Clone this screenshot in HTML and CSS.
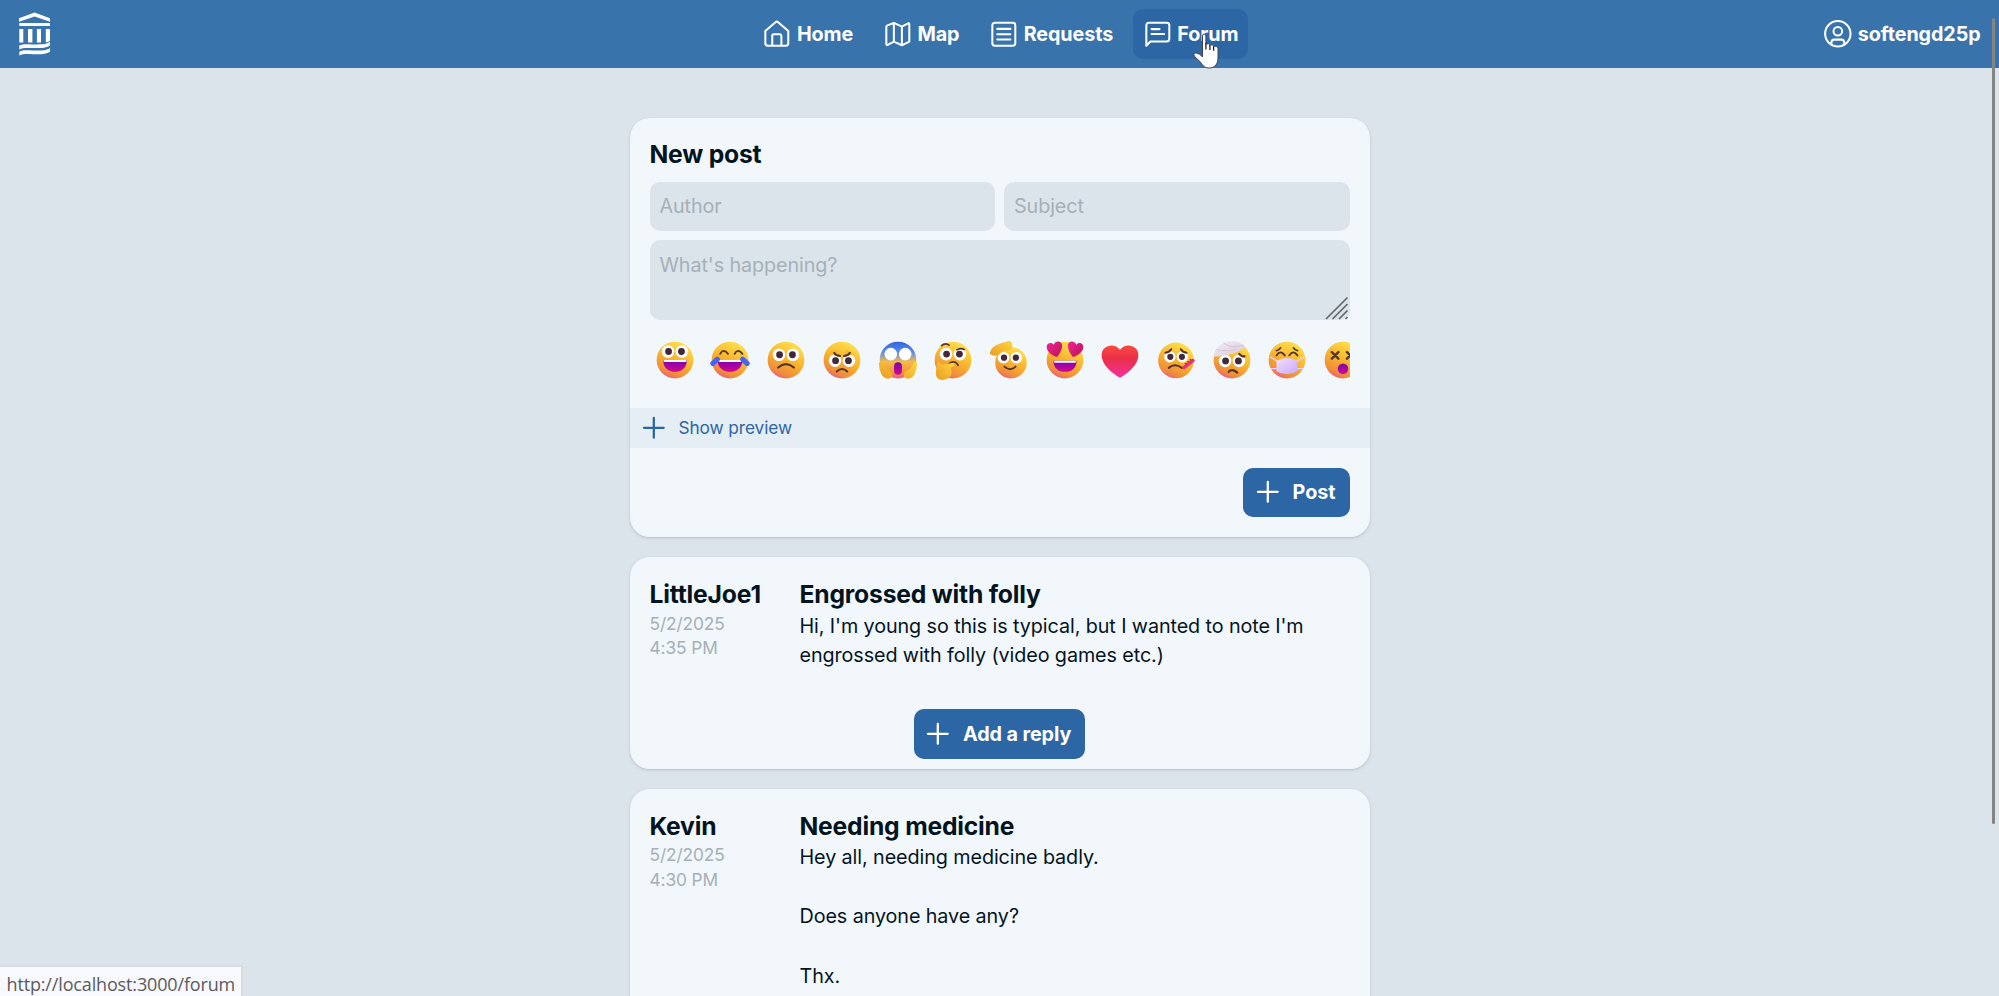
FILE: index.html
```html
<!DOCTYPE html>
<html lang="en">
<head>
<meta charset="utf-8">
<title>Forum</title>
<link rel="stylesheet" href="styles.css">
</head>
<body>
<svg class="defs" aria-hidden="true">
  <defs>
    <linearGradient id="shade" x1="0.75" y1="0.05" x2="0.3" y2="1"><stop offset="0" stop-color="#ffe04a"/><stop offset=".5" stop-color="#f8b22d"/><stop offset=".85" stop-color="#f08a3c"/><stop offset="1" stop-color="#e7588f"/></linearGradient>
    <linearGradient id="mouth" x1="0" y1="0" x2="0" y2="1"><stop offset="0" stop-color="#7c02b0"/><stop offset="1" stop-color="#d3068f"/></linearGradient>
    <linearGradient id="heart" x1=".5" y1="0" x2=".5" y2="1"><stop offset="0" stop-color="#fb4a3e"/><stop offset=".4" stop-color="#ea2f49"/><stop offset="1" stop-color="#f52f9d"/></linearGradient>
    <linearGradient id="pink" x1="0" y1="0" x2="1" y2="1"><stop offset="0" stop-color="#f0259b"/><stop offset="1" stop-color="#ba1250"/></linearGradient>
    <linearGradient id="fear" x1="0" y1="0" x2="0" y2="1"><stop offset="0" stop-color="#3263d8"/><stop offset=".28" stop-color="#588df0"/><stop offset=".55" stop-color="#f6bd45"/><stop offset=".85" stop-color="#f2913f"/><stop offset="1" stop-color="#e7588f"/></linearGradient>
    <linearGradient id="hand" x1="1" y1="0" x2="0" y2="1"><stop offset="0" stop-color="#ffd83e"/><stop offset="1" stop-color="#e99a25"/></linearGradient>
    <linearGradient id="mask" x1="0" y1="0" x2="1" y2="1"><stop offset="0" stop-color="#efe0ff"/><stop offset="1" stop-color="#cba8f5"/></linearGradient>
    <linearGradient id="wrap" x1="0" y1="0" x2="1" y2="1"><stop offset="0" stop-color="#f4edf4"/><stop offset="1" stop-color="#dac9dc"/></linearGradient>
    <symbol id="face" viewBox="0 0 32 32"><circle cx="16" cy="16" r="14" fill="url(#shade)"/></symbol>
    <symbol id="eyes" viewBox="0 0 32 32"><g fill="#fff"><circle cx="10.700" cy="12" r="4.800"/><circle cx="21.300" cy="12" r="4.800"/></g><g fill="#43273a"><circle cx="11.100" cy="12" r="2.600"/><circle cx="20.900" cy="12" r="2.600"/></g></symbol>
    <symbol id="plus" viewBox="0 0 24 24"><path d="M12 4v16M4 12h16" fill="none" stroke="currentColor" stroke-width="1.850" stroke-linecap="round"/></symbol>
  </defs>
</svg>

<header class="topbar">
  <a class="brand">
    <svg viewBox="0 0 32 44" fill="#fff">
      <path d="M0 6.300 15.600.5 31 6.300v3.400L15.600 4.500 0 9.700zM.3 10.900H31v3H.3zM.3 17h4v13.500h-4zM9 17h4.400v13.500H9zM17.900 17h4.100v13.500h-4.100zM26.800 17H31v11.500q-1.500 2-4.200 2z"/>
      <path d="M.3 33.500C5 31.300 9 32.600 16 32.400 23 32.400 27 32.600 31 29.800v3.700C27 36.500 22 36 16 36 9 36.200 4.500 35 .3 37.500zM.3 39.700C5 37.500 9 38.700 16 38.600 23 38.500 27 38.700 31 36v3.700C27 42.500 22 42.200 16 42.200 9 42.400 4.500 41.300.3 43.600z"/>
    </svg>
  </a>
  <nav class="nav">
    <a class="nav-item"><svg class="icon" viewBox="0 0 24 24"><path d="M2.700 9.700 10.900 2.600a1.600 1.600 0 0 1 2.200 0l8.200 7.100V19.700a2 2 0 0 1-2 2H4.700a2 2 0 0 1-2-2zM8.300 21.600v-8a1.200 1.200 0 0 1 1.200-1.200h5a1.200 1.200 0 0 1 1.200 1.200v8"/></svg><span>Home</span></a>
    <a class="nav-item"><svg class="icon" viewBox="0 0 24 24"><path d="M3.600 5.200 8.800 3.200 15.300 6.200 20.300 3.500Q21.300 3.200 21.300 4.300V18.300L15.300 21.300 8.800 18.300 3.800 21Q2.700 21.400 2.700 20.300V6.300Q2.700 5.600 3.600 5.200zM8.800 3.200v15.100M15.300 6.200v15.100"/></svg><span>Map</span></a>
    <a class="nav-item"><svg class="icon" viewBox="0 0 24 24"><rect x="2.700" y="3" width="18.600" height="18.600" rx="2"/><path d="M6.700 8h10.600M6.700 12.300h10.600M6.700 16.600h10.600"/></svg><span>Requests</span></a>
    <a class="nav-item active"><svg class="icon" viewBox="0 0 24 24"><path d="M2.700 21.600V5a2 2 0 0 1 2-2h14.600a2 2 0 0 1 2 2v11.300a2 2 0 0 1-2 2H6zM6.900 8.200h6.500M6.900 12.200h10.200"/></svg><span>Forum</span></a>
  </nav>
  <a class="nav-item user"><svg class="icon" viewBox="0 0 24 24"><circle cx="12" cy="12" r="10.300"/><circle cx="12" cy="9.900" r="3.500"/><path d="M6.800 20.700v-1.600a2.400 2.400 0 0 1 2.400-2.400h5.600a2.400 2.400 0 0 1 2.400 2.400v1.600"/></svg><span>softengd25p</span></a>
</header>

<main class="feed">
  <section class="card composer">
    <div class="composer-form">
      <h2 class="title">New post</h2>
      <div class="row">
        <input class="field" placeholder="Author">
        <input class="field" placeholder="Subject">
      </div>
      <div class="area">
        <span>What's happening?</span>
        <svg class="grip" viewBox="0 0 24 24"><path d="M1 23 22.500 1.500M7.500 23 22.500 8M14 23l8.500-8.500M20.500 23l2-2"/></svg>
      </div>
      <div class="emojis">
        <svg viewBox="0 0 32 32"><use href="#face"/><use href="#eyes" y="-2.500"/><path d="M7 16h18c0 6-4 9-9 9s-9-3-9-9z" fill="url(#mouth)"/><path d="M7.200 16h17.600l-.3 1.500h-17z" fill="#fff"/></svg>
        <svg viewBox="0 0 32 32"><use href="#face"/><path d="M8.500 11.300q2.500-4.500 6 0M19.500 11.300q2.500-4.500 6 0" fill="none" stroke="#55352f" stroke-width="1.400" stroke-linecap="round"/><path d="M6.500 16h19c0 6-4.500 9-9.500 9s-9.500-3-9.500-9z" fill="url(#mouth)"/><path d="M7 16h18l-.5 1.500h-17z" fill="#fff"/><path d="M6.300 15.500 3 18.600M25.700 15.500l3.300 3.100" stroke="#4664f2" stroke-width="4" stroke-linecap="round"/></svg>
        <svg viewBox="0 0 32 32"><use href="#face"/><use href="#eyes"/><path d="M10 21.700q6-5.200 12 0" fill="none" stroke="#55352f" stroke-width="1.700" stroke-linecap="round"/></svg>
        <svg viewBox="0 0 32 32"><use href="#face"/><use href="#eyes" y="4.500"/><path d="M6.500 12 13 8l2.500 5.500-5-1zM25.500 12 19 8l-2.500 5.500 5-1z" fill="#f6bb35"/><path d="M10 10.500q1.500 2.500 4.500 2.500M22 10.500q-1.500 2.500-4.500 2.500M12 24.700q4-3.700 8 0" fill="none" stroke="#55352f" stroke-width="1.600" stroke-linecap="round"/></svg>
        <svg viewBox="0 0 32 32"><circle cx="16" cy="16" r="14" fill="url(#fear)"/><circle cx="10.500" cy="11.500" r="4.800" fill="#fff"/><circle cx="21.500" cy="11.500" r="4.800" fill="#fff"/><rect x="13" y="17.700" width="6" height="9.500" rx="3" fill="url(#mouth)"/><path d="M1.500 18q2-1.500 3 1.500l2.500 3.500q5 1 4.500 5.500-2.500 3.500-7 0-3-4-3-10.500zM30.500 18q-2-1.500-3 1.500L25 23q-5 1-4.500 5.500 2.500 3.500 7 0 3-4 3-10.500z" fill="url(#hand)"/></svg>
        <svg viewBox="0 0 32 32"><use href="#face"/><use href="#eyes" y="-.5"/><path d="M7.200 5q3-2.500 5.800-.3M19 8.200q3-1.500 5.500-.2M12.700 19q4.500-3.500 7.200 1" fill="none" stroke="#55352f" stroke-width="1.300" stroke-linecap="round"/><path d="M4 17.500q2-1.300 3 2l9-1.200q2 .7.500 2.500l-2.500 1.300q2.300 3.500-.5 7-4 3.500-9 1.200-2-1.500-1.500-6z" fill="url(#hand)"/></svg>
        <svg viewBox="0 0 32 32"><circle cx="17.500" cy="18" r="12" fill="url(#shade)"/><g transform="translate(2 3.200) scale(.92)"><use href="#eyes"/></g><path d="M12.500 21q4.500 4 8.500 0" fill="none" stroke="#55352f" stroke-width="1.400" stroke-linecap="round"/><path d="M1.200 11q1-5 8-7.500l7-2.200q3 .8 2.200 5.700-1.500 2.500-5 1.300-3.400.3-5 3.700-4 2-7.200-1z" fill="url(#hand)"/></svg>
        <svg viewBox="0 0 32 32"><use href="#face"/><path d="M7.200 16.500h17.600c0 6-4 8.500-8.800 8.500s-8.800-2.500-8.800-8.500z" fill="url(#mouth)"/><path d="M7.500 16.500h17l-.4 1.500H7.900z" fill="#fff"/><path d="M10 13.800C6 12.500 2.200 9.500 2 6.200 1.900 3 5.600 1.900 7.500 4.300c.8-3.400 6-3.300 6.300.2.300 3-1.800 6.500-3.800 9.300z" fill="url(#pink)"/><path d="M22 13.800c4-1.300 7.800-4.300 8-7.600.1-3.200-3.600-4.300-5.500-1.900-.8-3.400-6-3.300-6.300.2-.3 3 1.800 6.500 3.800 9.300z" fill="url(#pink)"/></svg>
        <svg viewBox="0 0 32 32"><path d="M16 29.500C9 25.500 2 19 2 12.300 2 4.500 12 2.500 16 8.200 20 2.500 30 4.500 30 12.300 30 19 23 25.500 16 29.500z" fill="url(#heart)"/></svg>
        <svg viewBox="0 0 32 32"><circle cx="16" cy="16.300" r="13.600" fill="url(#shade)"/><g transform="translate(1.700 2.800) scale(.9)"><use href="#eyes"/></g><path d="M8 10.500q3-.5 4.300-2.700M24 10.500q-3-.5-4.300-2.700M10.500 22q4.500-4 10 0" fill="none" stroke="#55352f" stroke-width="1.600" stroke-linecap="round"/><path d="M22 21.800l7-5.500" stroke="#ef2a86" stroke-width="2.500" stroke-linecap="round"/><path d="M23 19l5-4" stroke="#55352f" stroke-width="1" stroke-dasharray="1 1.300"/></svg>
        <svg viewBox="0 0 32 32"><use href="#face"/><use href="#eyes" y="4.700"/><path d="M13.500 25q2.500-3 6.500.6M21.500 11.300q1.500 2 4 2" fill="none" stroke="#55352f" stroke-width="1.700" stroke-linecap="round"/><path d="M2 13.500Q3 4 12 2q8-2 14 3.800-6 6.700-24 7.700z" fill="url(#wrap)"/><path d="M9.500 3Q16 8 25 4.500M4 8q9 2 16-.5" stroke="#cfbfd3" stroke-width=".6" fill="none"/></svg>
        <svg viewBox="0 0 32 32"><use href="#face"/><path d="M8 12.500q3-4.500 6.300 0M17.700 12.500q3-4.500 6.300 0M8 8.800q2-.2 3-2M24 8.800q-2-.2-3-2" fill="none" stroke="#55352f" stroke-width="1.400" stroke-linecap="round"/><path d="M2.800 13.500 9 17M29.200 13.500 23 17M3.500 22.500H9M28.500 22.500H23" stroke="#e4d0fb" stroke-width="1"/><path d="M8 16.500q8-4 16 0v8q-8 4.500-16 0z" fill="url(#mask)"/></svg>
        <svg viewBox="0 0 32 32"><use href="#face"/><path d="m7.500 10 5 5m0-5-5 5M19 10l5 5m0-5-5 5" stroke="#55352f" stroke-width="1.800" stroke-linecap="round"/><circle cx="16" cy="22.700" r="4" fill="url(#mouth)"/></svg>
      </div>
    </div>
    <div class="preview"><svg class="icon"><use href="#plus"/></svg><span>Show preview</span></div>
    <div class="actions"><button class="btn"><svg class="icon"><use href="#plus"/></svg><span>Post</span></button></div>
  </section>

  <article class="card post">
    <div class="post-main">
      <div class="meta"><h2 class="title">LittleJoe1</h2><p class="date">5/2/2025<br>4:35 PM</p></div>
      <div class="content"><h2 class="title">Engrossed with folly</h2><p class="text">Hi, I'm young so this is typical, but I wanted to note I'm<br>engrossed with folly (video games etc.)</p></div>
    </div>
    <button class="btn reply"><svg class="icon"><use href="#plus"/></svg><span>Add a reply</span></button>
  </article>

  <article class="card post open">
    <div class="post-main">
      <div class="meta"><h2 class="title">Kevin</h2><p class="date">5/2/2025<br>4:30 PM</p></div>
      <div class="content"><h2 class="title">Needing medicine</h2><p class="text">Hey all, needing medicine badly.<br><br>Does anyone have any?<br><br>Thx.</p></div>
    </div>
  </article>
</main>

<div class="scroll-thumb"></div>
<div class="status">http://localhost:3000/forum</div>
<svg class="pointer" viewBox="0 0 26 37"><path d="M9.500 3q0-2 1.700-2t1.700 2v8q3.300-1 4 1 3-.7 3.700 1.200 3.900-.8 4.400 2.300v9.500c0 5.500-3 10-8.300 10-4.500 0-6.700-1.600-8.800-5.500L1.200 23c-.8-2 .2-3.500 2-3 2.500.5 4.500 1.800 6.300 4z" fill="#fff" stroke="#3c4352" stroke-width="1"/><path d="M12.900 10v6.500M16.900 12v5M20.600 13.200v4.500" stroke="#222" stroke-width="1.300"/></svg>
</body>
</html>
```
FILE: styles.css
```css
:root {
  font-size: 19.75px;
  --bg: #dce4eb;
  --card: #f2f7fb;
  --primary: #2d66a4;
  --text: #04141f;
  --muted: #a5b0b8;
}

* { box-sizing: border-box; }

html { overflow: hidden; }

body {
  display: flex;
  flex-direction: column;
  margin: 0;
  height: 996px;
  overflow: hidden;
  background: var(--bg);
  color: var(--text);
  font-family: Inter, "Liberation Sans", sans-serif;
  line-height: 1.5;
  letter-spacing: -.09px;
}

h2, p { margin: 0; }

.defs { position: absolute; width: 0; height: 0; }

.icon {
  flex: none;
  width: 1.5rem;
  height: 1.5rem;
  fill: none;
  stroke: currentColor;
  stroke-width: 1.65;
  stroke-linecap: round;
  stroke-linejoin: round;
}

/* Top navigation */
.topbar {
  display: flex;
  flex: none;
  align-items: center;
  height: 68px;
  padding: 0 8.500px 0 18.500px;
  background: #3873ab;
  color: #fff;
}

.brand { width: 734px; height: 44px; }
.brand svg { display: block; width: 32px; height: 44px; }

.nav { display: flex; gap: .5rem; }

.nav-item {
  display: flex;
  align-items: center;
  gap: .25rem;
  height: 2.5rem;
  padding: 0 .5rem;
  border-radius: .5rem;
  font-weight: 700;
}

.nav-item span, .btn span { padding-top: 1px; }

.nav-item.active { background: var(--primary); }
.user { margin-left: auto; }

/* Feed */
.feed {
  display: flex;
  flex: 1;
  flex-direction: column;
  gap: 20px;
  width: 740px;
  min-height: 0;
  margin: 50px auto 0;
}

.card {
  flex: none;
  border-radius: 1rem;
  background: var(--card);
  box-shadow: 0 1px 3px rgba(20, 50, 80, .2);
}

.card.open {
  flex: 1 0 auto;
  border-radius: 1rem 1rem 0 0;
}

.title {
  font-size: 1.25rem;
  font-weight: 700;
  line-height: 1.4;
  letter-spacing: -.2px;
}

.composer-form { padding: 19px 20px 26px; }

.row { display: flex; gap: 9px; margin-top: 10px; }

.field {
  flex: 1;
  min-width: 0;
  height: 49px;
  padding: 0 10px;
  border: 0;
  border-radius: .5rem;
  background: var(--bg);
  font: inherit;
  letter-spacing: inherit;
}

.field::placeholder { color: var(--muted); opacity: 1; }

.area {
  position: relative;
  height: 79.500px;
  margin-top: 9.500px;
  padding: 11px 10px;
  border-radius: .5rem;
  background: var(--bg);
  color: var(--muted);
}

.grip {
  position: absolute;
  right: 1px;
  bottom: 0;
  width: 24px;
  height: 24px;
  fill: none;
  stroke: #64686c;
  stroke-width: 1.7;
}

.emojis {
  display: flex;
  gap: 13.700px;
  margin-top: 19.500px;
  padding-left: 4.300px;
  overflow: hidden;
}

.emojis svg { flex: none; width: 42px; height: 42px; }

.preview {
  display: flex;
  align-items: center;
  gap: .5rem;
  height: 40px;
  margin-top: .5px;
  padding-left: 9.500px;
  background: #e5edf5;
  color: var(--primary);
  font-size: .875rem;
}

.preview span { padding-top: 1px; }

.actions { display: flex; justify-content: flex-end; padding: 20px; }

.btn {
  display: flex;
  align-items: center;
  gap: .5rem;
  height: 2.5rem;
  padding: 0 .72rem 0 .5rem;
  border: 0;
  border-radius: .5rem;
  background: var(--primary);
  color: #fff;
  font: inherit;
  font-weight: 700;
  letter-spacing: inherit;
}

.post { display: flex; flex-direction: column; padding: 20px 20px 10px; }
.post-main { display: flex; }
.meta { flex: none; width: 150px; }

.date {
  color: var(--muted);
  font-size: .875rem;
  line-height: 1.25rem;
}

.reply { align-self: center; margin-top: 38.500px; }

/* Browser overlays */
.scroll-thumb {
  position: absolute;
  top: 18px;
  left: 1992px;
  width: 3px;
  height: 806px;
  border-radius: 2px;
  background: #848484;
}

.status {
  position: absolute;
  left: 0;
  bottom: 0;
  width: 243px;
  height: 31px;
  padding-left: 6.500px;
  border-top: 2px solid #dcdcdf;
  border-right: 2px solid #dcdcdf;
  background: #f8f9fc;
  color: #5b5b5e;
  font: 18px/34px "Open Sans", "Noto Sans", sans-serif;
  letter-spacing: -.15px;
  white-space: nowrap;
}

.pointer {
  position: absolute;
  left: 1193px;
  top: 33px;
  width: 26px;
  height: 37px;
}
```
